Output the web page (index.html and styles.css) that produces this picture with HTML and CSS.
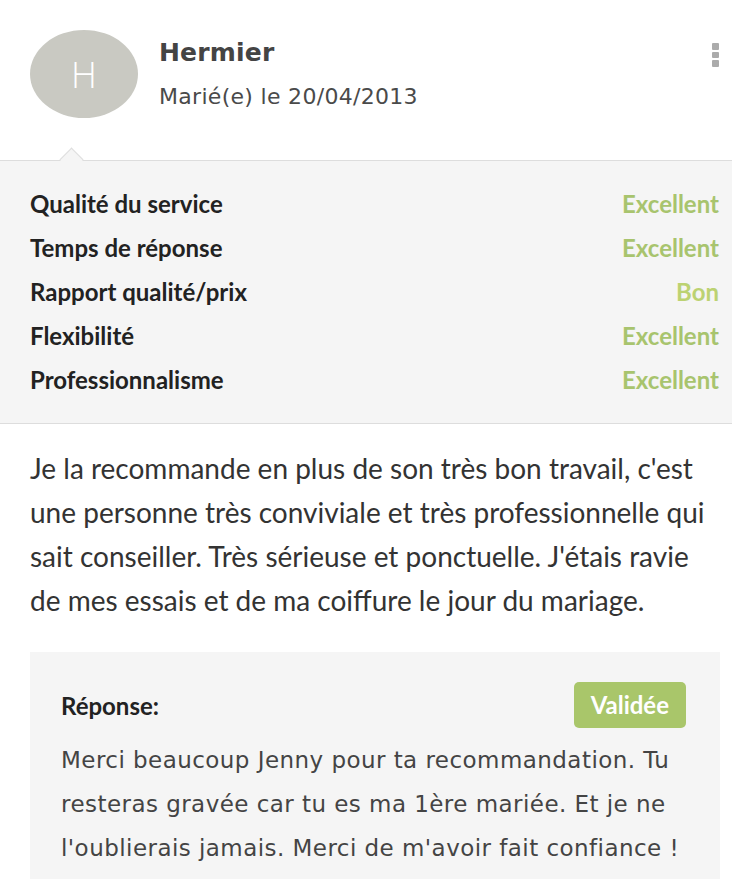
FILE: index.html
```html
<!DOCTYPE html>
<html lang="fr">
<head>
    <meta charset="UTF-8">
    <meta name="viewport" content="width=device-width, initial-scale=1.0">
    <title>Avis - Hermier</title>
    <link rel="stylesheet" href="styles.css">
</head>
<body>

<div class="review">
    <div class="review-head">
        <div class="avatar">H</div>
        <div class="who">
            <div class="name">Hermier</div>
            <div class="date">Marié(e) le 20/04/2013</div>
        </div>
        <div class="kebab">
            <span></span>
            <span></span>
            <span></span>
        </div>
    </div>

    <div class="ratings">
        <div class="rating">
            <span>Qualité du service</span>
            <span class="value">Excellent</span>
        </div>
        <div class="rating">
            <span>Temps de réponse</span>
            <span class="value">Excellent</span>
        </div>
        <div class="rating">
            <span>Rapport qualité/prix</span>
            <span class="value good">Bon</span>
        </div>
        <div class="rating">
            <span>Flexibilité</span>
            <span class="value">Excellent</span>
        </div>
        <div class="rating">
            <span>Professionnalisme</span>
            <span class="value">Excellent</span>
        </div>
    </div>

    <p class="review-text">Je la recommande en plus de son très bon travail, c'est une personne très conviviale et très professionnelle qui sait conseiller. Très sérieuse et ponctuelle. J'étais ravie de mes essais et de ma coiffure le jour du mariage.</p>

    <div class="answer">
        <div class="answer-head">
            <span class="answer-title">Réponse:</span>
            <span class="badge">Validée</span>
        </div>
        <p class="answer-text">Merci beaucoup Jenny pour ta recommandation. Tu resteras gravée car tu es ma 1ère mariée. Et je ne l'oublierais jamais. Merci de m'avoir fait confiance !</p>
    </div>
</div>

</body>
</html>
```

FILE: styles.css
```css
body {
    margin: 0;
    background: #ffffff;
    font-family: Lato, "Liberation Sans", sans-serif;
    color: #333333;
}

.review {
    width: 732px;
}

.review-head {
    display: flex;
    align-items: flex-start;
    padding: 30px 13px 0 30px;
    height: 160px;
    box-sizing: border-box;
}

.avatar {
    width: 108px;
    height: 88px;
    border-radius: 50%;
    background: #c9c9c2;
    color: #ffffff;
    font-family: "Open Sans", sans-serif;
    font-weight: 300;
    font-size: 36px;
    display: flex;
    align-items: center;
    justify-content: center;
    flex-shrink: 0;
}

.who {
    flex: 1;
    margin-left: 21px;
    font-family: "DejaVu Sans", sans-serif;
}

.name {
    font-size: 25px;
    font-weight: bold;
    color: #444444;
    margin-top: 8px;
    letter-spacing: 0.2px;
}

.date {
    font-size: 22px;
    color: #4a4a4a;
    margin-top: 17px;
    letter-spacing: 0.3px;
}

.kebab {
    display: flex;
    flex-direction: column;
    gap: 2px;
    margin-top: 13px;
}

.kebab span {
    width: 7px;
    height: 6.5px;
    border-radius: 1px;
    background: #ababab;
}

.ratings {
    position: relative;
    background: #f5f5f5;
    border-top: 1px solid #dddddd;
    border-bottom: 1px solid #dddddd;
    padding: 21px 13px 21px 30px;
}

.ratings::before {
    content: "";
    position: absolute;
    top: -10px;
    left: 63px;
    width: 16px;
    height: 16px;
    background: #f5f5f5;
    border-top: 1px solid #dddddd;
    border-left: 1px solid #dddddd;
    transform: rotate(45deg);
}

.rating {
    display: flex;
    justify-content: space-between;
    font-size: 24px;
    font-weight: bold;
    line-height: 44px;
    color: #222222;
}

.value {
    color: #a8c46e;
}

.value.good {
    color: #bcd272;
}

.review-text {
    margin: 22px 14px 0 30px;
    font-size: 28px;
    line-height: 44px;
    color: #333333;
}

.answer {
    margin: 30px 12px 0 30px;
    background: #f5f5f5;
    padding: 30px 34px 20px 31px;
}

.answer-head {
    display: flex;
    justify-content: space-between;
    align-items: center;
}

.answer-title {
    font-size: 24px;
    font-weight: bold;
    color: #222222;
}

.badge {
    background: #a9c66a;
    color: #ffffff;
    font-weight: bold;
    font-size: 24px;
    border-radius: 5px;
    padding: 0 17px;
    height: 46px;
    line-height: 46px;
}

.answer-text {
    margin: 10px -10px 0 0;
    font-family: "DejaVu Sans", sans-serif;
    font-size: 23px;
    letter-spacing: 0.45px;
    line-height: 44px;
    color: #444444;
}
```
